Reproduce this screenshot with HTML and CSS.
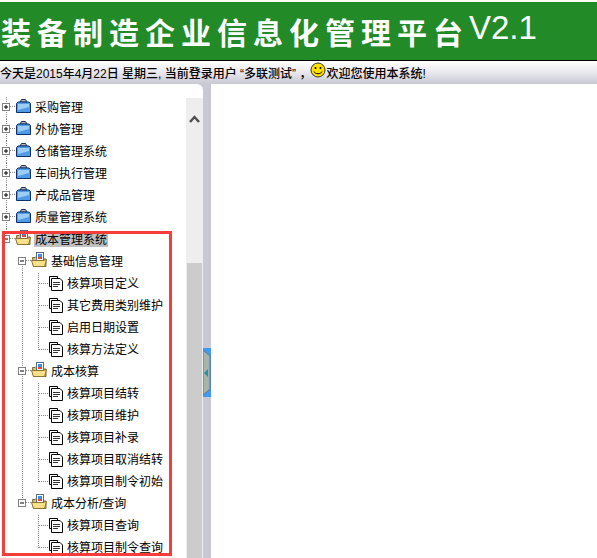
FILE: index.html

```html
<!DOCTYPE html>
<html lang="en">
<head>
  <meta charset="UTF-8" />
  <title>装备制造企业信息化管理平台</title>
  <link rel="stylesheet" href="styles.css">
</head>
<body>
  <svg class="defs" width="0" height="0">
    <symbol id="plus" viewBox="0 0 16 22">
      <path d="M6.5 0V5M6.5 13V22M10 9.5H16" stroke="#888" stroke-dasharray="1 1" fill="none"/>
      <rect x="2.5" y="6.5" width="7" height="7" fill="#fff" stroke="#808080"/>
      <path d="M4 10H8M6 8V12" stroke="#000" transform="translate(0 0)" fill="none"/>
    </symbol>
    <symbol id="minus-up" viewBox="0 0 16 22">
      <path d="M6.5 0V5M10 9.5H16" stroke="#888" stroke-dasharray="1 1" fill="none"/>
      <rect x="2.5" y="6.5" width="7" height="7" fill="#fff" stroke="#808080"/>
      <path d="M4 10H8" stroke="#000" fill="none"/>
    </symbol>
    <symbol id="minus-down" viewBox="0 0 16 22">
      <path d="M6.5 13V22M10 9.5H16" stroke="#888" stroke-dasharray="1 1" fill="none"/>
      <rect x="2.5" y="6.5" width="7" height="7" fill="#fff" stroke="#808080"/>
      <path d="M4 10H8" stroke="#000" fill="none"/>
    </symbol>
    <symbol id="minus-both" viewBox="0 0 16 22">
      <path d="M6.5 0V5M6.5 13V22M10 9.5H16" stroke="#888" stroke-dasharray="1 1" fill="none"/>
      <rect x="2.5" y="6.5" width="7" height="7" fill="#fff" stroke="#808080"/>
      <path d="M4 10H8" stroke="#000" fill="none"/>
    </symbol>
    <symbol id="vline" viewBox="0 0 16 22">
      <path d="M6.5 0V22" stroke="#888" stroke-dasharray="1 1" fill="none"/>
    </symbol>
    <symbol id="tee" viewBox="0 0 16 22">
      <path d="M6.5 0V22M7 10.5H16" stroke="#888" stroke-dasharray="1 1" fill="none"/>
    </symbol>
    <symbol id="ell" viewBox="0 0 16 22">
      <path d="M6.5 0V11M7 10.5H16" stroke="#888" stroke-dasharray="1 1" fill="none"/>
    </symbol>
    <symbol id="folder-blue" viewBox="0 0 16 16">
      <path d="M5 4L6.5 1.5H10.5L12 4Z" fill="#b8bcc4" stroke="#1c2c50"/>
      <path d="M1.5 5.5L3 4H14L15.500 5.500V14.500H1.500Z" fill="#4f9be8" stroke="#10306c"/>
      <path d="M3 6H14V9L3 12Z" fill="#9ccdf6"/>
    </symbol>
    <symbol id="folder-open" viewBox="0 0 16 16">
      <path d="M1.500 5.500H4L5 4.500H10V7H15V14.500H2.500Z" fill="#d9c07a" stroke="#7a6a30"/>
      <rect x="5.500" y="0.500" width="7" height="8" fill="#fff" stroke="#5a6a90"/>
      <rect x="7" y="2" width="4" height="3" fill="#3f8fe0"/>
      <rect x="7" y="5" width="4" height="2" fill="#e04a3a"/>
      <path d="M0.500 8.500H12L15.500 7.500L13.500 14.500H2.500Z" fill="#fbe08a" stroke="#8a7430"/>
    </symbol>
    <symbol id="doc" viewBox="0 0 16 16">
      <path d="M3.500 11.500H1.500V1.500H9.500V3" fill="none" stroke="#000"/>
      <path d="M3.500 3.500H12L14.500 6V15.500H3.500Z" fill="#fff" stroke="#000"/>
      <path d="M5 7.500H12M5 9.500H12M5 11.500H10" stroke="#333" fill="none"/>
    </symbol>
  </svg>

  <div class="banner">
    <span class="banner-cn">装备制造企业信息化管理平台</span><span class="banner-ver">V2.1</span>
  </div>

  <div class="infobar">
    <span>今天是2015年4月22日 星期三, 当前登录用户 “多联测试” ，</span>
    <svg class="smiley" width="16" height="16" viewBox="0 0 16 16">
      <circle cx="8" cy="8" r="7" fill="#ffe000" stroke="#333"/>
      <circle cx="5.500" cy="6" r="1" fill="#000"/>
      <circle cx="10.500" cy="6" r="1" fill="#000"/>
      <path d="M4 9.500C5 12.500 11 12.500 12 9.500" fill="none" stroke="#000"/>
    </svg>
    <span>欢迎您使用本系统!</span>
  </div>

  <div class="main">
    <div class="sidebar">
      <div class="tree">
        <div class="node root"><svg class="cell"><use href="#plus"/></svg><svg class="ico"><use href="#folder-blue"/></svg><span class="label">采购管理</span></div>
        <div class="node root"><svg class="cell"><use href="#plus"/></svg><svg class="ico"><use href="#folder-blue"/></svg><span class="label">外协管理</span></div>
        <div class="node root"><svg class="cell"><use href="#plus"/></svg><svg class="ico"><use href="#folder-blue"/></svg><span class="label">仓储管理系统</span></div>
        <div class="node root"><svg class="cell"><use href="#plus"/></svg><svg class="ico"><use href="#folder-blue"/></svg><span class="label">车间执行管理</span></div>
        <div class="node root"><svg class="cell"><use href="#plus"/></svg><svg class="ico"><use href="#folder-blue"/></svg><span class="label">产成品管理</span></div>
        <div class="node root"><svg class="cell"><use href="#plus"/></svg><svg class="ico"><use href="#folder-blue"/></svg><span class="label">质量管理系统</span></div>
        <div class="node root"><svg class="cell"><use href="#minus-up"/></svg><svg class="ico"><use href="#folder-open"/></svg><span class="label selected">成本管理系统</span></div>

        <div class="node"><span class="cell"></span><svg class="cell"><use href="#minus-down"/></svg><svg class="ico"><use href="#folder-open"/></svg><span class="label">基础信息管理</span></div>
        <div class="node leaf"><span class="cell"></span><svg class="cell"><use href="#vline"/></svg><svg class="cell"><use href="#tee"/></svg><svg class="ico"><use href="#doc"/></svg><span class="label">核算项目定义</span></div>
        <div class="node leaf"><span class="cell"></span><svg class="cell"><use href="#vline"/></svg><svg class="cell"><use href="#tee"/></svg><svg class="ico"><use href="#doc"/></svg><span class="label">其它费用类别维护</span></div>
        <div class="node leaf"><span class="cell"></span><svg class="cell"><use href="#vline"/></svg><svg class="cell"><use href="#tee"/></svg><svg class="ico"><use href="#doc"/></svg><span class="label">启用日期设置</span></div>
        <div class="node leaf"><span class="cell"></span><svg class="cell"><use href="#vline"/></svg><svg class="cell"><use href="#ell"/></svg><svg class="ico"><use href="#doc"/></svg><span class="label">核算方法定义</span></div>

        <div class="node"><span class="cell"></span><svg class="cell"><use href="#minus-both"/></svg><svg class="ico"><use href="#folder-open"/></svg><span class="label">成本核算</span></div>
        <div class="node leaf"><span class="cell"></span><svg class="cell"><use href="#vline"/></svg><svg class="cell"><use href="#tee"/></svg><svg class="ico"><use href="#doc"/></svg><span class="label">核算项目结转</span></div>
        <div class="node leaf"><span class="cell"></span><svg class="cell"><use href="#vline"/></svg><svg class="cell"><use href="#tee"/></svg><svg class="ico"><use href="#doc"/></svg><span class="label">核算项目维护</span></div>
        <div class="node leaf"><span class="cell"></span><svg class="cell"><use href="#vline"/></svg><svg class="cell"><use href="#tee"/></svg><svg class="ico"><use href="#doc"/></svg><span class="label">核算项目补录</span></div>
        <div class="node leaf"><span class="cell"></span><svg class="cell"><use href="#vline"/></svg><svg class="cell"><use href="#tee"/></svg><svg class="ico"><use href="#doc"/></svg><span class="label">核算项目取消结转</span></div>
        <div class="node leaf"><span class="cell"></span><svg class="cell"><use href="#vline"/></svg><svg class="cell"><use href="#ell"/></svg><svg class="ico"><use href="#doc"/></svg><span class="label">核算项目制令初始</span></div>

        <div class="node"><span class="cell"></span><svg class="cell"><use href="#minus-up"/></svg><svg class="ico"><use href="#folder-open"/></svg><span class="label">成本分析/查询</span></div>
        <div class="node leaf"><span class="cell"></span><span class="cell"></span><svg class="cell"><use href="#tee"/></svg><svg class="ico"><use href="#doc"/></svg><span class="label">核算项目查询</span></div>
        <div class="node leaf"><span class="cell"></span><span class="cell"></span><svg class="cell"><use href="#ell"/></svg><svg class="ico"><use href="#doc"/></svg><span class="label">核算项目制令查询</span></div>

        <div class="redbox"></div>
      </div>

      <div class="scrollbar">
        <svg class="arrow" width="11" height="8" viewBox="0 0 11 8">
          <path d="M1 7L5.500 2L10 7" fill="none" stroke="#505050" stroke-width="2.500"/>
        </svg>
        <div class="thumb"></div>
      </div>
    </div>

    <div class="gutter">
      <svg class="splitter" width="8" height="49" viewBox="0 0 8 49">
        <rect width="8" height="49" fill="#3d9bf3"/>
        <path d="M0 2L7 8V41L0 47Z" fill="#a8b4a8" stroke="#70708c"/>
        <path d="M1 25L5 21V29Z" fill="#2f8f9f"/>
      </svg>
    </div>

    <div class="content"></div>
  </div>
</body>
</html>
```

FILE: styles.css

```css
html, body {
  height: 100%;
}

body {
  margin: 0;
  display: flex;
  flex-direction: column;
  overflow: hidden;
  background-color: #fff;
  font-family: "Liberation Sans", "Noto Sans CJK SC", sans-serif;
  font-size: 12px;
  color: #000;
}

.defs {
  display: block;
  height: 0;
}

/* top banner */
.banner {
  flex: none;
  height: 58px;
  margin-top: 2px;
  padding-left: 1px;
  display: flex;
  align-items: center;
  background-color: #228b28;
  border-bottom: 1px solid #000;
  color: #fff;
  white-space: nowrap;
}

.banner-cn {
  font-family: "Noto Sans CJK SC", sans-serif;
  font-size: 30px;
  font-weight: bold;
  letter-spacing: 6px;
}

.banner-ver {
  font-size: 33px;
  margin-bottom: 6px;
}

.infobar {
  flex: none;
  height: 23px;
  display: flex;
  align-items: center;
  background: linear-gradient(#ffffff, #eeeef2 40%, #c8c8d4);
  white-space: pre;
  font-weight: 500;
}

.smiley {
  flex: none;
  margin: -6px 0 0 -1px;
}

/* main area */
.main {
  flex: 1;
  display: flex;
  min-height: 0;
  background-color: #c8c8d6;
}

.sidebar {
  flex: none;
  width: 203px;
  display: flex;
  background-color: #fff;
  border-top-right-radius: 6px;
  overflow: hidden;
}

.tree {
  position: relative;
  width: 186px;
  padding-top: 13px;
}

.node {
  display: flex;
  align-items: center;
  height: 22px;
  white-space: nowrap;
}

.cell {
  flex: none;
  display: block;
  width: 16px;
  height: 22px;
}

.ico {
  flex: none;
  width: 16px;
  height: 16px;
  margin: -4px 0 0 -1px;
}

.label {
  margin-left: 4px;
  line-height: 14px;
}

.leaf .ico {
  margin-left: 0;
  margin-top: -2px;
}

.leaf .label {
  margin-left: 3px;
}

.selected {
  background-color: #c0c0c0;
  margin-left: 3px;
  padding: 0 1px;
}

/* annotation drawn over the tree */
.redbox {
  position: absolute;
  left: 2px;
  top: 147px;
  width: 164px;
  height: 319px;
  border: 3px solid #f83c3c;
}

.scrollbar {
  flex: none;
  width: 17px;
  margin-top: 14px;
  display: flex;
  flex-direction: column;
  align-items: center;
  background-color: #eeeeee;
}

.arrow {
  margin-top: 17px;
}

.thumb {
  width: 15px;
  flex: 1;
  margin-top: 140px;
  background-color: #cccccc;
}

.gutter {
  flex: none;
  width: 8px;
  padding-top: 264px;
}

.splitter {
  display: block;
}

.content {
  flex: 1;
  background-color: #fff;
}
```
